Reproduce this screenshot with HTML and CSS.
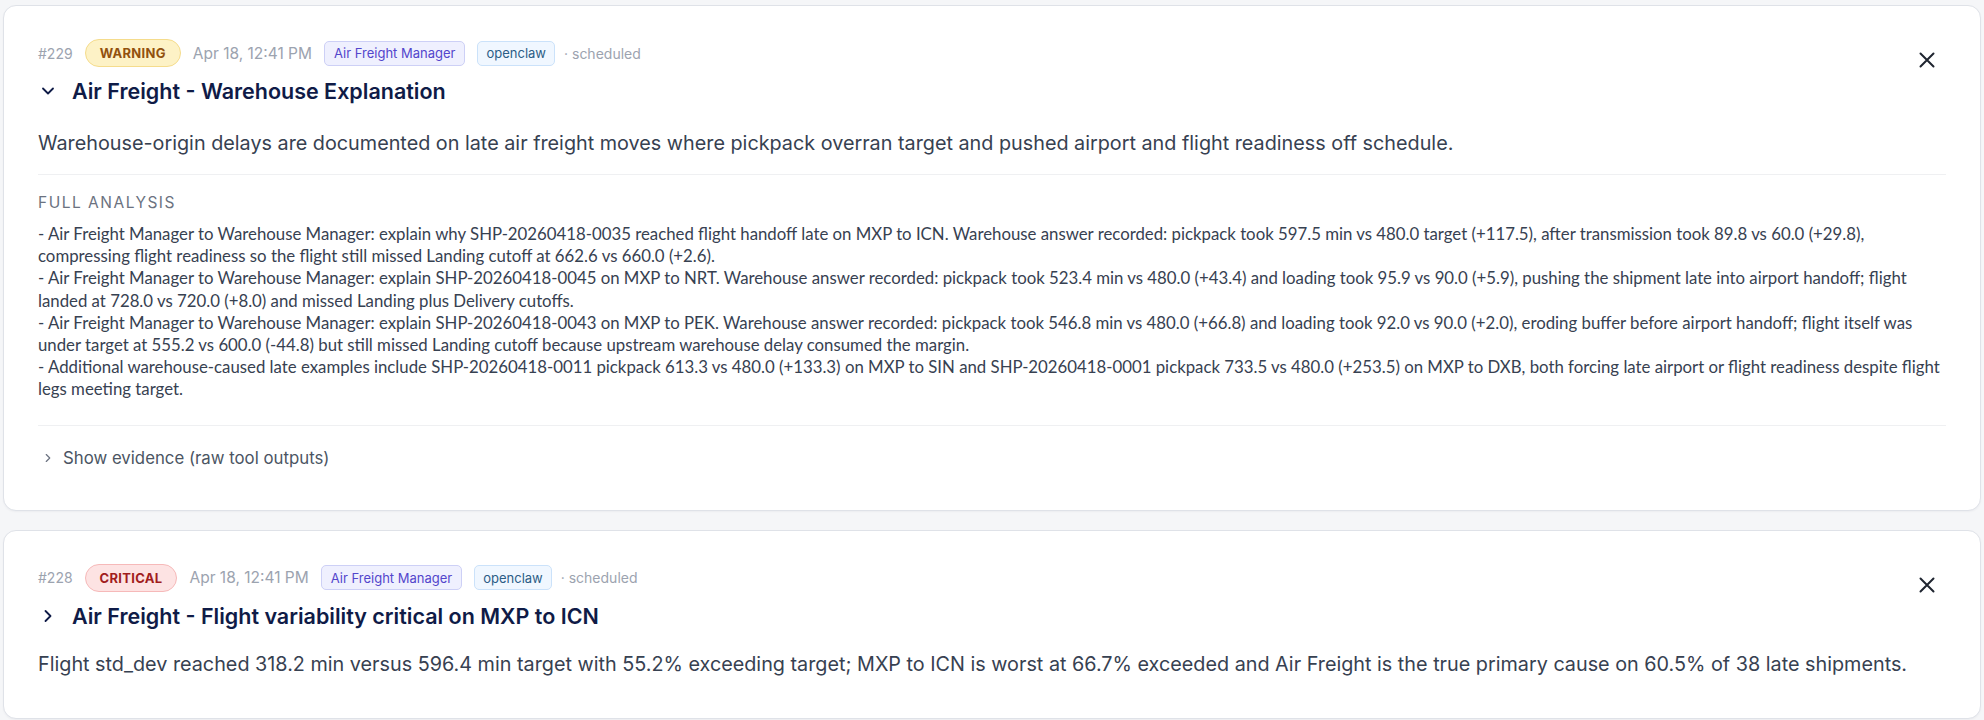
FILE: index.html
```html
<!DOCTYPE html>
<html lang="en">
<head>
<meta charset="utf-8">
<title>Alerts</title>
<link rel="stylesheet" href="styles.css">
</head>
<body>
<main class="list">
  <article class="card">
    <div class="card-head">
      <div class="head-main">
        <div class="meta">
          <span class="num">#229</span>
          <span class="sev sev-warning">WARNING</span>
          <span class="date">Apr 18, 12:41 PM</span>
          <span class="tag tag-agent">Air Freight Manager</span>
          <span class="tag tag-src">openclaw</span>
          <span class="sched">· scheduled</span>
        </div>
        <h2 class="title">
          <svg class="chev" viewBox="0 0 24 24" width="20" height="20"><path d="M6 9l6 6 6-6"/></svg>
          <span>Air Freight - Warehouse Explanation</span>
        </h2>
      </div>
      <button class="close" aria-label="Dismiss">
        <svg viewBox="0 0 24 24" width="24" height="24"><path d="M5.5 5.5l13 13M18.5 5.5l-13 13"/></svg>
      </button>
    </div>
    <p class="summary">Warehouse-origin delays are documented on late air freight moves where pickpack overran target and pushed airport and flight readiness off schedule.</p>
    <section class="analysis">
      <div class="label">FULL ANALYSIS</div>
      <div class="analysis-text">- Air Freight Manager to Warehouse Manager: explain why SHP-20260418-0035 reached flight handoff late on MXP to ICN. Warehouse answer recorded: pickpack took 597.5 min vs 480.0 target (+117.5), after transmission took 89.8 vs 60.0 (+29.8), compressing flight readiness so the flight still missed Landing cutoff at 662.6 vs 660.0 (+2.6).
- Air Freight Manager to Warehouse Manager: explain SHP-20260418-0045 on MXP to NRT. Warehouse answer recorded: pickpack took 523.4 min vs 480.0 (+43.4) and loading took 95.9 vs 90.0 (+5.9), pushing the shipment late into airport handoff; flight landed at 728.0 vs 720.0 (+8.0) and missed Landing plus Delivery cutoffs.
- Air Freight Manager to Warehouse Manager: explain SHP-20260418-0043 on MXP to PEK. Warehouse answer recorded: pickpack took 546.8 min vs 480.0 (+66.8) and loading took 92.0 vs 90.0 (+2.0), eroding buffer before airport handoff; flight itself was under target at 555.2 vs 600.0 (-44.8) but still missed Landing cutoff because upstream warehouse delay consumed the margin.
- Additional warehouse-caused late examples include SHP-20260418-0011 pickpack 613.3 vs 480.0 (+133.3) on MXP to SIN and SHP-20260418-0001 pickpack 733.5 vs 480.0 (+253.5) on MXP to DXB, both forcing late airport or flight readiness despite flight legs meeting target.</div>
    </section>
    <div class="evidence">
      <svg class="ev-chev" viewBox="0 0 24 24" width="14" height="14"><path d="M9 6l6 6-6 6"/></svg>
      <span>Show evidence (raw tool outputs)</span>
    </div>
  </article>

  <article class="card is-collapsed">
    <div class="card-head">
      <div class="head-main">
        <div class="meta">
          <span class="num">#228</span>
          <span class="sev sev-critical">CRITICAL</span>
          <span class="date">Apr 18, 12:41 PM</span>
          <span class="tag tag-agent">Air Freight Manager</span>
          <span class="tag tag-src">openclaw</span>
          <span class="sched">· scheduled</span>
        </div>
        <h2 class="title">
          <svg class="chev" viewBox="0 0 24 24" width="20" height="20"><path d="M9 6l6 6-6 6"/></svg>
          <span>Air Freight - Flight variability critical on MXP to ICN</span>
        </h2>
      </div>
      <button class="close" aria-label="Dismiss">
        <svg viewBox="0 0 24 24" width="24" height="24"><path d="M5.5 5.5l13 13M18.5 5.5l-13 13"/></svg>
      </button>
    </div>
    <p class="summary">Flight std_dev reached 318.2 min versus 596.4 min target with 55.2% exceeding target; MXP to ICN is worst at 66.7% exceeded and Air Freight is the true primary cause on 60.5% of 38 late shipments.</p>
  </article>
</main>
</body>
</html>
```
FILE: styles.css
```css
* { box-sizing: border-box; }
html, body { margin: 0; padding: 0; }
body {
  background: #f5f6f8;
  font-family: Inter, "Noto Sans", sans-serif;
  color: #374151;
}
.list {
  display: flex;
  flex-direction: column;
  gap: 19px;
  padding: 5px 3px;
}
.card {
  background: #ffffff;
  border: 1px solid #dfe2e8;
  border-radius: 13px;
  padding: 33px 34px 40px;
  box-shadow: 0 1px 2px rgba(16, 24, 40, 0.04);
}
.card-head {
  display: flex;
  align-items: flex-start;
  gap: 16px;
}
.head-main {
  flex: 1;
  display: flex;
  flex-direction: column;
  gap: 10px;
}
.meta {
  display: flex;
  align-items: center;
  gap: 12px;
  font-size: 14px;
  color: #9ca3af;
  height: 28px;
}
.num { color: #9ca3af; }
.sev {
  display: inline-flex;
  align-items: center;
  height: 28px;
  padding: 0 14px;
  border-radius: 14px;
  font-size: 13px;
  font-weight: 700;
  letter-spacing: 0.3px;
  border: 1px solid;
}
.sev-warning { background: #fdf2c6; border-color: #f5dc8c; color: #92510e; }
.sev-critical { background: #fde3e3; border-color: #f6b9b9; color: #a11d1d; }
.date { color: #9ca3af; font-size: 15.5px; }
.tag {
  display: inline-flex;
  align-items: center;
  height: 25px;
  padding: 0 8px;
  border-radius: 5px;
  font-size: 13px;
  border: 1px solid;
}
.tag-agent { background: #eff0fe; border-color: #cdd0f6; color: #5346cc; padding: 0 9px; }
.tag-src { background: #f0f7ff; border-color: #cbe2fa; color: #2c5d86; }
.sched { color: #9ca3af; margin-left: -3px; }
.title {
  margin: 0;
  display: flex;
  align-items: center;
  gap: 14px;
  font-size: 21.5px;
  line-height: 28px;
  font-weight: 600;
  color: #0f1b47;
}
.chev {
  fill: none;
  stroke: #0f1b47;
  stroke-width: 2.2;
  stroke-linecap: round;
  stroke-linejoin: round;
  flex: none;
}
.close {
  flex: none;
  width: 38px;
  height: 38px;
  margin-top: 2px;
  border: 0;
  background: transparent;
  padding: 0;
  display: flex;
  align-items: center;
  justify-content: center;
  cursor: pointer;
}
.close svg {
  fill: none;
  stroke: #1f2530;
  stroke-width: 2;
  stroke-linecap: round;
}
.summary {
  margin: 24px 0 0;
  font-size: 19.8px;
  line-height: 28px;
  color: #374151;
}
.is-collapsed .summary { margin-top: 20px; }
.analysis {
  margin-top: 17px;
  border-top: 1px solid #eff0f2;
  padding-top: 18px;
  padding-bottom: 24px;
  border-bottom: 1px solid #eff0f2;
}
.label {
  font-size: 15.5px;
  line-height: 20px;
  letter-spacing: 1.5px;
  color: #6b7280;
  margin-bottom: 10px;
}
.analysis-text {
  white-space: pre-line;
  font-family: Lato, "Noto Sans", sans-serif;
  font-size: 16.8px;
  line-height: 22.2px;
  color: #374151;
}
.evidence {
  display: flex;
  align-items: center;
  gap: 8px;
  padding-top: 20px;
  font-size: 16.8px;
  line-height: 24px;
  color: #4b5563;
}
.ev-chev {
  fill: none;
  stroke: #6b7280;
  stroke-width: 2;
  stroke-linecap: round;
  stroke-linejoin: round;
  margin-left: 3px;
}
```
